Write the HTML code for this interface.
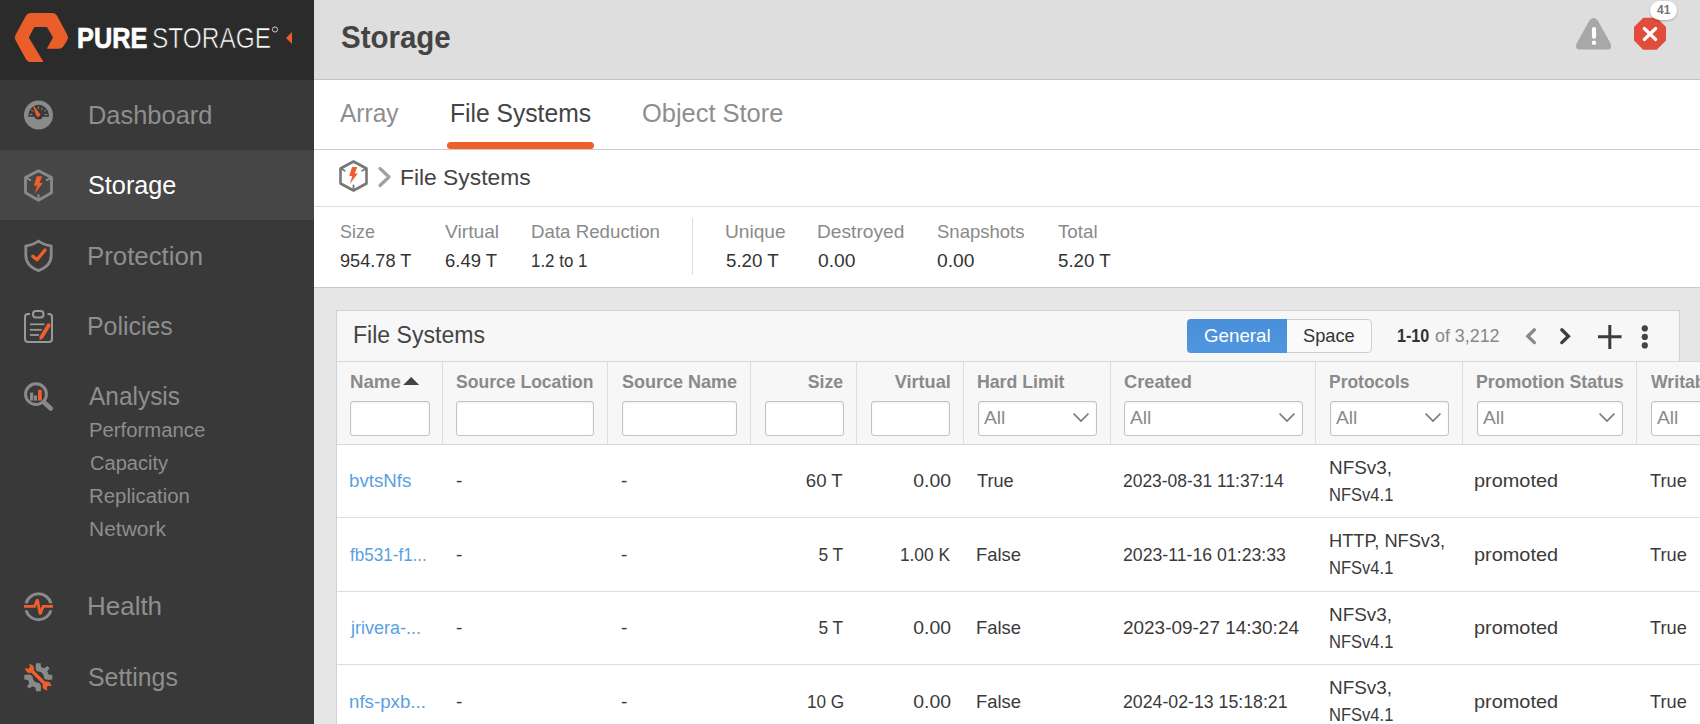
<!DOCTYPE html>
<html><head><meta charset="utf-8"><title>Storage - File Systems</title>
<style>
html,body{margin:0;padding:0;}
body{width:1700px;height:724px;position:relative;overflow:hidden;background:#e6e6e6;font-family:"Liberation Sans",sans-serif;}
.t{position:absolute;white-space:nowrap;line-height:1;}
.r,.a{position:absolute;}
svg text{font-family:"Liberation Sans",sans-serif;}
.inp{background:#fff;border:1px solid #c2c2c2;border-radius:3px;box-shadow:inset 0 1px 2px rgba(0,0,0,0.07);}
</style></head><body>
<div class="r" style="left:0px;top:0px;width:314px;height:80px;background:#2b2b2b;"></div>
<div class="r" style="left:0px;top:80px;width:314px;height:644px;background:#393939;"></div>
<div class="r" style="left:0px;top:150px;width:314px;height:70px;background:#464646;"></div>
<div class="r" style="left:314px;top:0px;width:1386px;height:80px;background:#dedede;"></div>
<div class="r" style="left:314px;top:79px;width:1386px;height:1px;background:#c4c4c4;"></div>
<div class="r" style="left:314px;top:80px;width:1386px;height:70px;background:#ffffff;"></div>
<div class="r" style="left:314px;top:149px;width:1386px;height:1px;background:#cccccc;"></div>
<div class="r" style="left:314px;top:150px;width:1386px;height:56px;background:#ffffff;"></div>
<div class="r" style="left:314px;top:206px;width:1386px;height:1px;background:#dddddd;"></div>
<div class="r" style="left:314px;top:207px;width:1386px;height:80px;background:#ffffff;"></div>
<div class="r" style="left:314px;top:287px;width:1386px;height:1px;background:#c8c8c8;"></div>
<div class="r" style="left:314px;top:288px;width:1386px;height:436px;background:#e6e6e6;"></div>
<svg class="a" style="left:0;top:0" width="314" height="80" viewBox="0 0 314 80">
<path d="M43.24,61.57 Q43.50,62.00 43.00,62.00 L31.00,62.00 Q27.50,62.00 25.81,58.93 L15.69,40.57 Q14.00,37.50 15.69,34.43 L25.81,16.07 Q27.50,13.00 31.00,13.00 L52.00,13.00 Q55.50,13.00 57.17,16.08 L67.13,34.42 Q68.80,37.50 67.02,40.52 L63.72,46.12 Q62.20,48.70 59.20,48.70 L47.30,48.70 Q46.80,48.70 47.04,48.26 L52.76,37.94 Q53.00,37.50 52.75,37.07 L47.25,27.43 Q47.00,27.00 46.50,27.00 L34.80,27.00 Q34.30,27.00 34.07,27.44 L29.03,37.06 Q28.80,37.50 29.06,37.93 Z" fill="#ea5e2a"/>
<text x="77" y="48" font-family="Liberation Sans" font-weight="700" font-size="29.5" fill="#fff" stroke="#fff" stroke-width="0.7" textLength="70.3" lengthAdjust="spacingAndGlyphs">PURE</text>
<text x="152" y="48" font-family="Liberation Sans" font-weight="400" font-size="29.5" fill="#fff" stroke="#2b2b2b" stroke-width="0.7" textLength="119" lengthAdjust="spacingAndGlyphs">STORAGE</text>
<circle cx="275" cy="29.5" r="2.6" fill="none" stroke="#ddd" stroke-width="0.9"/>
<path d="M292,32 L292,44 L286,38 Z" fill="#ea5e2a"/>
</svg>
<div class="t" style="top:102.00px;font-size:26px;color:#8e8e8e;left:87.54px;transform:scaleX(0.9779);transform-origin:left top;">Dashboard</div>
<div class="t" style="top:172.00px;font-size:26px;color:#ffffff;left:88.03px;transform:scaleX(0.9709);transform-origin:left top;">Storage</div>
<div class="t" style="top:243.00px;font-size:26px;color:#8e8e8e;left:87.02px;transform:scaleX(0.9920);transform-origin:left top;">Protection</div>
<div class="t" style="top:313.00px;font-size:26px;color:#8e8e8e;left:87.08px;transform:scaleX(0.9579);transform-origin:left top;">Policies</div>
<div class="t" style="top:383.00px;font-size:26px;color:#8e8e8e;left:88.50px;transform:scaleX(0.9399);transform-origin:left top;">Analysis</div>
<div class="t" style="top:421.00px;font-size:19.5px;color:#8e8e8e;left:89.36px;transform:scaleX(1.0411);transform-origin:left top;">Performance</div>
<div class="t" style="top:454.00px;font-size:19.5px;color:#8e8e8e;left:90.40px;transform:scaleX(1.0287);transform-origin:left top;">Capacity</div>
<div class="t" style="top:487.00px;font-size:19.5px;color:#8e8e8e;left:89.35px;transform:scaleX(1.0452);transform-origin:left top;">Replication</div>
<div class="t" style="top:520.00px;font-size:19.5px;color:#8e8e8e;left:89.32px;transform:scaleX(1.0754);transform-origin:left top;">Network</div>
<div class="t" style="top:593.00px;font-size:26px;color:#8e8e8e;left:87.00px;transform:scaleX(0.9987);transform-origin:left top;">Health</div>
<div class="t" style="top:664.00px;font-size:26px;color:#8e8e8e;left:88.04px;transform:scaleX(0.9565);transform-origin:left top;">Settings</div>
<svg class="a" style="left:0;top:80px" width="80" height="644" viewBox="0 80 80 644">
<!-- dashboard -->
<circle cx="38.5" cy="115" r="14.5" fill="#8a8a8a"/>
<path d="M28.2,116.8 A10.4,12 0 0 1 49,116.8 Z" fill="#393939"/>
<ellipse cx="38.5" cy="116.5" rx="4" ry="3" fill="#393939"/>
<g stroke="#8a8a8a" stroke-width="1" stroke-linecap="round">
<line x1="30" y1="114.5" x2="32" y2="114.5"/><line x1="31.5" y1="110.3" x2="33" y2="111.3"/>
<line x1="38.3" y1="106.5" x2="38.3" y2="108.8"/><line x1="41.5" y1="109.5" x2="42.5" y2="108"/>
<line x1="44.2" y1="111.3" x2="45.7" y2="110.3"/><line x1="45" y1="114.5" x2="47" y2="114.5"/></g>
<path d="M32.3,104 L40.2,114.2 A2.3,2.3 0 0 1 36.5,116.2 Z" fill="#ee5f2b"/>
<!-- storage hex -->
<path d="M38.5,170.8 L51.5,177.6 L51.5,192.8 L38.5,200.2 L25.5,192.8 L25.5,177.6 Z" fill="none" stroke="#8a8a8a" stroke-width="2.8" stroke-linejoin="round"/>
<g stroke="#8a8a8a" stroke-width="2" stroke-linecap="round"><line x1="27" y1="178.3" x2="30.2" y2="180"/><line x1="50" y1="178.3" x2="46.8" y2="180"/><line x1="38.5" y1="199" x2="38.5" y2="195"/></g>
<path d="M36.7,176.3 L42.1,176.3 L39.5,183 L42.8,183 L34.5,194 L37.2,185.7 L33.9,185.7 Z" fill="#ee5f2b"/>
<!-- protection shield -->
<path d="M38.5,241 C35,243.6 30.5,245.3 25.8,245.8 L25.8,255 C25.8,262.5 30.5,267.8 38.5,270.6 C46.5,267.8 51.2,262.5 51.2,255 L51.2,245.8 C46.5,245.3 42,243.6 38.5,241 Z" fill="none" stroke="#8a8a8a" stroke-width="2.8" stroke-linejoin="round"/>
<path d="M32.8,256.2 L37,259.8 L45,250" fill="none" stroke="#ee5f2b" stroke-width="3.3" stroke-linecap="round" stroke-linejoin="round"/>
<!-- policies clipboard -->
<path d="M30,314 L28,314 Q25,314 25,317 L25,339 Q25,342 28,342 L49,342 Q52,342 52,339 L52,317 Q52,314 49,314 L47.5,314" fill="none" stroke="#999" stroke-width="2"/>
<rect x="33" y="311" width="10.5" height="6.5" rx="3" fill="none" stroke="#999" stroke-width="2"/>
<g stroke="#999" stroke-width="1.8"><line x1="30" y1="324.3" x2="44.5" y2="324.3"/><line x1="30" y1="329.8" x2="41.8" y2="329.8"/><line x1="30" y1="335" x2="39" y2="335"/></g>
<path d="M41.5,337 L48.2,326" stroke="#393939" stroke-width="5.6" stroke-linecap="round"/>
<path d="M39.60,340.30 L42.92,338.57 L50.37,326.21 A1.95,1.95 0 0 0 47.03,324.19 L39.58,336.55 Z" fill="#ee5f2b"/>
<!-- analysis magnifier -->
<circle cx="36" cy="394.2" r="10.4" fill="none" stroke="#8a8a8a" stroke-width="3"/>
<path d="M44.5,402.8 L50.8,408.5" stroke="#8a8a8a" stroke-width="4.6" stroke-linecap="round"/>
<rect x="30" y="392.6" width="3.2" height="8" fill="#8a8a8a"/><rect x="33.9" y="395.5" width="3.1" height="5.1" fill="#8a8a8a"/><rect x="38" y="389.8" width="3.8" height="10.8" fill="#ee5f2b"/>
<!-- health -->
<path d="M26,603.3 A13,13 0 0 1 51,603.3 M51,610.3 A13,13 0 0 1 26,610.3" fill="none" stroke="#8a8a8a" stroke-width="3"/>
<path d="M24,606.3 L34.6,606.3 L37.4,599.6 L40.2,614.2 L43.2,606.3 L53,606.3" fill="none" stroke="#ee5f2b" stroke-width="2.8" stroke-linejoin="miter" stroke-miterlimit="3"/>
<!-- settings -->
<g transform="translate(38.3,677.2)">
<path d="M-2.3,-14 L2.3,-14 L2.8,-10.3 L6,-9 L9,-11.3 L11.3,-9 L9,-6 L10.3,-2.8 L14,-2.3 L14,2.3 L10.3,2.8 L9,6 L11.3,9 L9,11.3 L6,9 L2.8,10.3 L2.3,14 L-2.3,14 L-2.8,10.3 L-6,9 L-9,11.3 L-11.3,9 L-9,6 L-10.3,2.8 L-14,2.3 L-14,-2.3 L-10.3,-2.8 L-9,-6 L-11.3,-9 L-9,-11.3 L-6,-9 L-2.8,-10.3 Z M0,-5.6 A5.6,5.6 0 1 0 0.01,-5.6 Z" fill="#8a8a8a" fill-rule="evenodd"/>
<path d="M-9,-9 L9,9" stroke="#393939" stroke-width="7"/>
<circle cx="-8.6" cy="-8.6" r="6.2" fill="#393939"/><circle cx="8.6" cy="8.6" r="6.2" fill="#393939"/>
<path d="M-8,-8 L8,8" stroke="#ee5f2b" stroke-width="3.4"/>
<circle cx="-8.6" cy="-8.6" r="4.4" fill="#ee5f2b"/><circle cx="8.6" cy="8.6" r="4.4" fill="#ee5f2b"/>
<path d="M-9.2,-13.5 L-9.2,-9.2 L-13.5,-9.2 Z" fill="#393939"/>
<circle cx="-10.8" cy="-10.8" r="2.3" fill="#393939"/><circle cx="10.8" cy="10.8" r="2.3" fill="#393939"/>
<path d="M9.2,13.5 L9.2,9.2 L13.5,9.2 Z" fill="#393939"/>
</g>
</svg>
<div class="t" style="top:22.00px;font-size:31px;color:#444;font-weight:700;left:340.50px;transform:scaleX(0.9507);transform-origin:left top;">Storage</div>
<svg class="a" style="left:1560px;top:0" width="140" height="60" viewBox="1560 0 140 60">
<path d="M1593.6,18 Q1596.2,18 1597.8,20.6 L1610.6,43.6 Q1612.6,49.6 1607.5,49.6 L1579.7,49.6 Q1574.6,49.6 1576.6,43.6 L1589.4,20.6 Q1591,18 1593.6,18 Z" fill="#a8a8a8"/>
<rect x="1591.9" y="27" width="4.2" height="11.8" rx="2.1" fill="#fff"/><circle cx="1594" cy="42.8" r="2.2" fill="#fff"/>
<path d="M1643.6,18.6 L1656.4,18.6 L1665.2,27.4 L1665.2,40.1 L1656.4,48.9 L1643.6,48.9 L1634.8,40.1 L1634.8,27.4 Z" fill="#e14c3b" stroke="#e14c3b" stroke-width="1.6" stroke-linejoin="round"/>
<path d="M1644.3,28.5 L1655.7,39.5 M1655.7,28.5 L1644.3,39.5" stroke="#fff" stroke-width="3.2" stroke-linecap="round"/>
</svg>
<div class="a" style="left:1650px;top:1px;width:27px;height:19px;border-radius:10px;background:#fff;box-shadow:0 1px 2px rgba(0,0,0,0.25)"></div>
<div class="t" style="top:4.00px;font-size:12px;color:#777;font-weight:700;left:1657.00px;">41</div>
<div class="t" style="top:101.00px;font-size:25px;color:#8e8e8e;left:340.00px;transform:scaleX(0.9796);transform-origin:left top;">Array</div>
<div class="t" style="top:101.00px;font-size:25px;color:#444;left:449.53px;transform:scaleX(0.9852);transform-origin:left top;">File Systems</div>
<div class="t" style="top:101.00px;font-size:25px;color:#8e8e8e;left:641.98px;transform:scaleX(1.0172);transform-origin:left top;">Object Store</div>
<div class="r" style="left:447px;top:142px;width:147px;height:7px;background:#ee5f2b;border-radius:3.5px;"></div>
<svg class="a" style="left:330px;top:150px" width="80" height="56" viewBox="330 150 80 56">
<path d="M353.5,161.5 L366.5,168.5 L366.5,183.5 L353.5,190.5 L340.5,183.5 L340.5,168.5 Z" fill="none" stroke="#777" stroke-width="2.6" stroke-linejoin="round"/>
<g stroke="#777" stroke-width="1.8" stroke-linecap="round"><line x1="342" y1="169.2" x2="344.8" y2="170.8"/><line x1="365" y1="169.2" x2="362.2" y2="170.8"/><line x1="353.5" y1="189.5" x2="353.5" y2="185.5"/></g>
<path d="M352,167 L357.2,167 L354.7,173.5 L357.8,173.5 L349.8,184 L352.3,176 L349.2,176 Z" fill="#ee5f2b"/>
<path d="M380,168.5 L389,177 L380,185.5" fill="none" stroke="#a0a0a0" stroke-width="3.2" stroke-linecap="round" stroke-linejoin="round"/>
</svg>
<div class="t" style="top:167.00px;font-size:22.5px;color:#444;left:400.49px;transform:scaleX(1.0140);transform-origin:left top;">File Systems</div>
<div class="t" style="top:222.00px;font-size:19px;color:#8a8a8a;left:340.00px;transform:scaleX(0.9425);transform-origin:left top;">Size</div>
<div class="t" style="top:251.00px;font-size:19px;color:#333;left:340.00px;transform:scaleX(0.9550);transform-origin:left top;">954.78 T</div>
<div class="t" style="top:222.00px;font-size:19px;color:#8a8a8a;left:445.30px;transform:scaleX(1.0117);transform-origin:left top;">Virtual</div>
<div class="t" style="top:251.00px;font-size:19px;color:#333;left:445.30px;transform:scaleX(0.9713);transform-origin:left top;">6.49 T</div>
<div class="t" style="top:222.00px;font-size:19px;color:#8a8a8a;left:530.52px;transform:scaleX(0.9845);transform-origin:left top;">Data Reduction</div>
<div class="t" style="top:251.00px;font-size:19px;color:#333;left:530.61px;transform:scaleX(0.8897);transform-origin:left top;">1.2 to 1</div>
<div class="t" style="top:222.00px;font-size:19px;color:#8a8a8a;left:724.59px;transform:scaleX(1.0061);transform-origin:left top;">Unique</div>
<div class="t" style="top:251.00px;font-size:19px;color:#333;left:725.60px;transform:scaleX(0.9842);transform-origin:left top;">5.20 T</div>
<div class="t" style="top:222.00px;font-size:19px;color:#8a8a8a;left:817.39px;transform:scaleX(1.0091);transform-origin:left top;">Destroyed</div>
<div class="t" style="top:251.00px;font-size:19px;color:#333;left:818.40px;transform:scaleX(1.0134);transform-origin:left top;">0.00</div>
<div class="t" style="top:222.00px;font-size:19px;color:#8a8a8a;left:937.20px;transform:scaleX(0.9744);transform-origin:left top;">Snapshots</div>
<div class="t" style="top:251.00px;font-size:19px;color:#333;left:937.20px;transform:scaleX(1.0134);transform-origin:left top;">0.00</div>
<div class="t" style="top:222.00px;font-size:19px;color:#8a8a8a;left:1057.60px;transform:scaleX(0.9868);transform-origin:left top;">Total</div>
<div class="t" style="top:251.00px;font-size:19px;color:#333;left:1057.60px;transform:scaleX(0.9842);transform-origin:left top;">5.20 T</div>
<div class="r" style="left:692px;top:218px;width:1px;height:57px;background:#dddddd;"></div>
<div class="a" style="left:336px;top:310px;width:1342px;height:50px;background:#f7f7f7;border:1px solid #d2d2d2;border-bottom:none"></div>
<div class="t" style="top:324.00px;font-size:23px;color:#444;left:352.50px;transform:scaleX(1.0036);transform-origin:left top;">File Systems</div>
<div class="a" style="left:1187px;top:319px;width:183px;height:32px;border:1px solid #cfcfcf;border-radius:4px;background:#fafafa"></div>
<div class="a" style="left:1187px;top:319px;width:100px;height:34px;border-radius:4px 0 0 4px;background:linear-gradient(#4a8fd8,#4f97e0)"></div>
<div class="t" style="top:326.00px;font-size:19px;color:#fff;left:1204.00px;transform:scaleX(0.9853);transform-origin:left top;">General</div>
<div class="t" style="top:326.00px;font-size:19px;color:#333;left:1303.40px;transform:scaleX(0.9605);transform-origin:left top;">Space</div>
<div class="t" style="top:326.00px;font-size:19px;color:#333;font-weight:700;left:1396.75px;transform:scaleX(0.8502);transform-origin:left top;">1-10</div>
<div class="t" style="top:326.00px;font-size:19px;color:#888;left:1435.00px;transform:scaleX(0.9397);transform-origin:left top;">of 3,212</div>
<svg class="a" style="left:1510px;top:315px" width="160" height="40" viewBox="1510 315 160 40">
<path d="M1534.4,329.8 L1527.8,336.2 L1534.4,342.6" fill="none" stroke="#888" stroke-width="3.3" stroke-linecap="round" stroke-linejoin="miter"/>
<path d="M1561.8,329.8 L1568.4,336.2 L1561.8,342.6" fill="none" stroke="#3c3c3c" stroke-width="3.3" stroke-linecap="round" stroke-linejoin="miter"/>
<path d="M1609.8,325 L1609.8,349 M1598,336.7 L1621.6,336.7" stroke="#3c3c3c" stroke-width="3"/>
<circle cx="1644.8" cy="328.4" r="3.1" fill="#444"/><circle cx="1644.8" cy="336.9" r="3.1" fill="#444"/><circle cx="1644.8" cy="345.4" r="3.1" fill="#444"/>
</svg>
<div class="r" style="left:336px;top:361px;width:1364px;height:1px;background:#d8d8d8;"></div>
<div class="r" style="left:336px;top:362px;width:1364px;height:82px;background:#f7f7f7;"></div>
<div class="r" style="left:336px;top:444px;width:1364px;height:1px;background:#d8d8d8;"></div>
<div class="r" style="left:336px;top:310px;width:1px;height:414px;background:#d2d2d2;"></div>
<div class="r" style="left:442px;top:362px;width:1px;height:82px;background:#dddddd;"></div>
<div class="r" style="left:607px;top:362px;width:1px;height:82px;background:#dddddd;"></div>
<div class="r" style="left:750px;top:362px;width:1px;height:82px;background:#dddddd;"></div>
<div class="r" style="left:856px;top:362px;width:1px;height:82px;background:#dddddd;"></div>
<div class="r" style="left:963px;top:362px;width:1px;height:82px;background:#dddddd;"></div>
<div class="r" style="left:1110px;top:362px;width:1px;height:82px;background:#dddddd;"></div>
<div class="r" style="left:1315px;top:362px;width:1px;height:82px;background:#dddddd;"></div>
<div class="r" style="left:1462px;top:362px;width:1px;height:82px;background:#dddddd;"></div>
<div class="r" style="left:1636px;top:362px;width:1px;height:82px;background:#dddddd;"></div>
<div class="t" style="top:372.00px;font-size:19px;color:#8a8a8a;font-weight:700;left:349.52px;transform:scaleX(0.9824);transform-origin:left top;">Name</div>
<svg class="a" style="left:400px;top:372px" width="24" height="18" viewBox="400 372 24 18"><path d="M411.2,377 L419.2,385 L403.2,385 Z" fill="#444"/></svg>
<div class="t" style="top:372.00px;font-size:19px;color:#8a8a8a;font-weight:700;left:456.30px;transform:scaleX(0.9241);transform-origin:left top;">Source Location</div>
<div class="t" style="top:372.00px;font-size:19px;color:#8a8a8a;font-weight:700;left:621.80px;transform:scaleX(0.9481);transform-origin:left top;">Source Name</div>
<div class="t" style="top:372.00px;font-size:19px;color:#8a8a8a;font-weight:700;right:856.67px;transform:scaleX(0.9265);transform-origin:right top;">Size</div>
<div class="t" style="top:372.00px;font-size:19px;color:#8a8a8a;font-weight:700;right:749.48px;transform:scaleX(0.9547);transform-origin:right top;">Virtual</div>
<div class="t" style="top:372.00px;font-size:19px;color:#8a8a8a;font-weight:700;left:976.67px;transform:scaleX(0.9314);transform-origin:left top;">Hard Limit</div>
<div class="t" style="top:372.00px;font-size:19px;color:#8a8a8a;font-weight:700;left:1123.80px;transform:scaleX(0.9595);transform-origin:left top;">Created</div>
<div class="t" style="top:372.00px;font-size:19px;color:#8a8a8a;font-weight:700;left:1328.98px;transform:scaleX(0.9192);transform-origin:left top;">Protocols</div>
<div class="t" style="top:372.00px;font-size:19px;color:#8a8a8a;font-weight:700;left:1475.57px;transform:scaleX(0.9326);transform-origin:left top;">Promotion Status</div>
<div class="t" style="top:372.00px;font-size:19px;color:#8a8a8a;font-weight:700;left:1650.50px;transform:scaleX(0.9300);transform-origin:left top;">Writable</div>
<div class="a inp" style="left:350px;top:401px;width:78px;height:32.5px"></div>
<div class="a inp" style="left:456px;top:401px;width:135.5px;height:32.5px"></div>
<div class="a inp" style="left:621.5px;top:401px;width:113.0px;height:32.5px"></div>
<div class="a inp" style="left:764.5px;top:401px;width:77.0px;height:32.5px"></div>
<div class="a inp" style="left:870.5px;top:401px;width:77.0px;height:32.5px"></div>
<div class="a inp" style="left:977.5px;top:401px;width:117.0px;height:32.5px"></div>
<div class="t" style="top:409.00px;font-size:18.5px;color:#8a8a8a;left:984.30px;transform:scaleX(1.0386);transform-origin:left top;">All</div>
<svg class="a" style="left:1071.5px;top:410px" width="20" height="16" viewBox="0 0 20 16"><path d="M1.5,3.5 L9,11 L16.5,3.5" fill="none" stroke="#777" stroke-width="1.7"/></svg>
<div class="a inp" style="left:1123.5px;top:401px;width:177.0px;height:32.5px"></div>
<div class="t" style="top:409.00px;font-size:18.5px;color:#8a8a8a;left:1130.30px;transform:scaleX(1.0386);transform-origin:left top;">All</div>
<svg class="a" style="left:1277.5px;top:410px" width="20" height="16" viewBox="0 0 20 16"><path d="M1.5,3.5 L9,11 L16.5,3.5" fill="none" stroke="#777" stroke-width="1.7"/></svg>
<div class="a inp" style="left:1329.5px;top:401px;width:117.0px;height:32.5px"></div>
<div class="t" style="top:409.00px;font-size:18.5px;color:#8a8a8a;left:1336.30px;transform:scaleX(1.0386);transform-origin:left top;">All</div>
<svg class="a" style="left:1423.5px;top:410px" width="20" height="16" viewBox="0 0 20 16"><path d="M1.5,3.5 L9,11 L16.5,3.5" fill="none" stroke="#777" stroke-width="1.7"/></svg>
<div class="a inp" style="left:1476.5px;top:401px;width:144.0px;height:32.5px"></div>
<div class="t" style="top:409.00px;font-size:18.5px;color:#8a8a8a;left:1483.30px;transform:scaleX(1.0386);transform-origin:left top;">All</div>
<svg class="a" style="left:1597.5px;top:410px" width="20" height="16" viewBox="0 0 20 16"><path d="M1.5,3.5 L9,11 L16.5,3.5" fill="none" stroke="#777" stroke-width="1.7"/></svg>
<div class="a inp" style="left:1650.5px;top:401px;width:107.5px;height:32.5px"></div>
<div class="t" style="top:409.00px;font-size:18.5px;color:#8a8a8a;left:1657.30px;transform:scaleX(1.0386);transform-origin:left top;">All</div>
<div class="r" style="left:337px;top:445px;width:1363px;height:279px;background:#ffffff;"></div>
<div class="r" style="left:337px;top:517px;width:1363px;height:1px;background:#dddddd;"></div>
<div class="t" style="top:471.00px;font-size:19px;color:#5a9fe2;left:349.02px;transform:scaleX(0.9847);transform-origin:left top;">bvtsNfs</div>
<div class="t" style="top:471.00px;font-size:19px;color:#3a3a3a;left:456.00px;">-</div>
<div class="t" style="top:471.00px;font-size:19px;color:#3a3a3a;left:621.00px;">-</div>
<div class="t" style="top:471.00px;font-size:19px;color:#3a3a3a;right:857.39px;transform:scaleX(0.9788);transform-origin:right top;">60 T</div>
<div class="t" style="top:471.00px;font-size:19px;color:#3a3a3a;right:749.42px;transform:scaleX(1.0216);transform-origin:right top;">0.00</div>
<div class="t" style="top:471.00px;font-size:19px;color:#3a3a3a;left:977.00px;transform:scaleX(0.9578);transform-origin:left top;">True</div>
<div class="t" style="top:471.00px;font-size:19px;color:#3a3a3a;left:1122.60px;transform:scaleX(0.9176);transform-origin:left top;">2023-08-31 11:37:14</div>
<div class="t" style="top:458.00px;font-size:19px;color:#3a3a3a;left:1328.51px;transform:scaleX(0.9940);transform-origin:left top;">NFSv3,</div>
<div class="t" style="top:485.00px;font-size:19px;color:#3a3a3a;left:1328.63px;transform:scaleX(0.8708);transform-origin:left top;">NFSv4.1</div>
<div class="t" style="top:471.00px;font-size:19px;color:#3a3a3a;left:1474.45px;transform:scaleX(1.0470);transform-origin:left top;">promoted</div>
<div class="t" style="top:471.00px;font-size:19px;color:#3a3a3a;left:1650.00px;transform:scaleX(0.9604);transform-origin:left top;">True</div>
<div class="r" style="left:337px;top:591px;width:1363px;height:1px;background:#dddddd;"></div>
<div class="t" style="top:545.00px;font-size:19px;color:#5a9fe2;left:350.00px;transform:scaleX(0.8982);transform-origin:left top;">fb531-f1...</div>
<div class="t" style="top:545.00px;font-size:19px;color:#3a3a3a;left:456.00px;">-</div>
<div class="t" style="top:545.00px;font-size:19px;color:#3a3a3a;left:621.00px;">-</div>
<div class="t" style="top:545.00px;font-size:19px;color:#3a3a3a;right:857.36px;transform:scaleX(0.9122);transform-origin:right top;">5 T</div>
<div class="t" style="top:545.00px;font-size:19px;color:#3a3a3a;right:750.30px;transform:scaleX(0.9105);transform-origin:right top;">1.00 K</div>
<div class="t" style="top:545.00px;font-size:19px;color:#3a3a3a;left:976.03px;transform:scaleX(0.9689);transform-origin:left top;">False</div>
<div class="t" style="top:545.00px;font-size:19px;color:#3a3a3a;left:1122.60px;transform:scaleX(0.9309);transform-origin:left top;">2023-11-16 01:23:33</div>
<div class="t" style="top:531.00px;font-size:19px;color:#3a3a3a;left:1328.54px;transform:scaleX(0.9597);transform-origin:left top;">HTTP, NFSv3,</div>
<div class="t" style="top:558.00px;font-size:19px;color:#3a3a3a;left:1328.63px;transform:scaleX(0.8708);transform-origin:left top;">NFSv4.1</div>
<div class="t" style="top:545.00px;font-size:19px;color:#3a3a3a;left:1474.45px;transform:scaleX(1.0470);transform-origin:left top;">promoted</div>
<div class="t" style="top:545.00px;font-size:19px;color:#3a3a3a;left:1650.00px;transform:scaleX(0.9604);transform-origin:left top;">True</div>
<div class="r" style="left:337px;top:664px;width:1363px;height:1px;background:#dddddd;"></div>
<div class="t" style="top:618.00px;font-size:19px;color:#5a9fe2;left:350.95px;transform:scaleX(0.9482);transform-origin:left top;">jrivera-...</div>
<div class="t" style="top:618.00px;font-size:19px;color:#3a3a3a;left:456.00px;">-</div>
<div class="t" style="top:618.00px;font-size:19px;color:#3a3a3a;left:621.00px;">-</div>
<div class="t" style="top:618.00px;font-size:19px;color:#3a3a3a;right:857.36px;transform:scaleX(0.9122);transform-origin:right top;">5 T</div>
<div class="t" style="top:618.00px;font-size:19px;color:#3a3a3a;right:749.42px;transform:scaleX(1.0216);transform-origin:right top;">0.00</div>
<div class="t" style="top:618.00px;font-size:19px;color:#3a3a3a;left:976.03px;transform:scaleX(0.9689);transform-origin:left top;">False</div>
<div class="t" style="top:618.00px;font-size:19px;color:#3a3a3a;left:1122.60px;transform:scaleX(0.9974);transform-origin:left top;">2023-09-27 14:30:24</div>
<div class="t" style="top:605.00px;font-size:19px;color:#3a3a3a;left:1328.51px;transform:scaleX(0.9940);transform-origin:left top;">NFSv3,</div>
<div class="t" style="top:632.00px;font-size:19px;color:#3a3a3a;left:1328.63px;transform:scaleX(0.8708);transform-origin:left top;">NFSv4.1</div>
<div class="t" style="top:618.00px;font-size:19px;color:#3a3a3a;left:1474.45px;transform:scaleX(1.0470);transform-origin:left top;">promoted</div>
<div class="t" style="top:618.00px;font-size:19px;color:#3a3a3a;left:1650.00px;transform:scaleX(0.9604);transform-origin:left top;">True</div>
<div class="t" style="top:692.00px;font-size:19px;color:#5a9fe2;left:349.02px;transform:scaleX(0.9833);transform-origin:left top;">nfs-pxb...</div>
<div class="t" style="top:692.00px;font-size:19px;color:#3a3a3a;left:456.00px;">-</div>
<div class="t" style="top:692.00px;font-size:19px;color:#3a3a3a;left:621.00px;">-</div>
<div class="t" style="top:692.00px;font-size:19px;color:#3a3a3a;right:856.29px;transform:scaleX(0.9058);transform-origin:right top;">10 G</div>
<div class="t" style="top:692.00px;font-size:19px;color:#3a3a3a;right:749.42px;transform:scaleX(1.0216);transform-origin:right top;">0.00</div>
<div class="t" style="top:692.00px;font-size:19px;color:#3a3a3a;left:976.03px;transform:scaleX(0.9689);transform-origin:left top;">False</div>
<div class="t" style="top:692.00px;font-size:19px;color:#3a3a3a;left:1122.60px;transform:scaleX(0.9326);transform-origin:left top;">2024-02-13 15:18:21</div>
<div class="t" style="top:678.00px;font-size:19px;color:#3a3a3a;left:1328.51px;transform:scaleX(0.9940);transform-origin:left top;">NFSv3,</div>
<div class="t" style="top:705.00px;font-size:19px;color:#3a3a3a;left:1328.63px;transform:scaleX(0.8708);transform-origin:left top;">NFSv4.1</div>
<div class="t" style="top:692.00px;font-size:19px;color:#3a3a3a;left:1474.45px;transform:scaleX(1.0470);transform-origin:left top;">promoted</div>
<div class="t" style="top:692.00px;font-size:19px;color:#3a3a3a;left:1650.00px;transform:scaleX(0.9604);transform-origin:left top;">True</div>
</body></html>
